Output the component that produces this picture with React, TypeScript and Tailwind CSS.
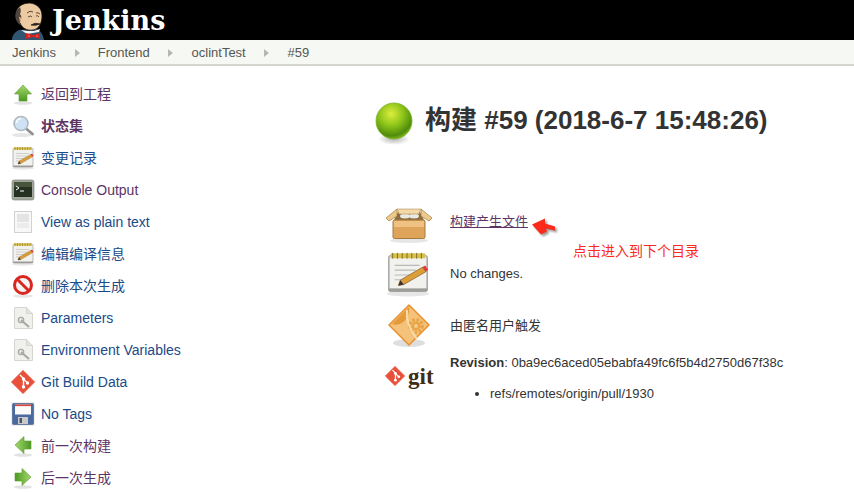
import type { ReactNode } from 'react';

const sans = 'font-["Liberation_Sans","Noto_Sans_CJK_SC",sans-serif]';

const Jenkins = () => (
  <svg width="34" height="40" viewBox="0 0 34 40">
    <path d="M0 40c0-5 3-8 7-10l17-1c4 1 7 5 8 11z" fill="#2f5570" />
    <path d="M4 15C4 7 10 3 18 3c7 1 12 5 12 13 0 7-3 13-9 14-6 1-11-2-13-7-3-1-4-5-4-8z" fill="#eccaa2" stroke="#1d1613" strokeWidth="0.800" />
    <path d="M8 25C3 21 2 15 5 10l3-3c1 3 1 5 0 7 1 2 2 3 1 5-1 2-1 4-1 6z" fill="#4d453e" />
    <path d="M7 17q2-1 2 3l-1 2z" fill="#d9ae84" />
    <path d="M15 13q3-3 6-1M24 13q2-1 4 1M16 17q3-2 4 0M24 16q2-1 3 1" stroke="#3a2a22" strokeWidth="0.800" fill="none" />
    <path d="M19 25q4-3 9-1-4 2-9 1z" fill="#2c211c" stroke="#2c211c" strokeWidth="0.800" />
    <path d="M9 30l6 4 12-2 1-3-6 2-7 0z" fill="#f4f4f4" />
    <path d="M14 33l7 2 7-2v6l-7-2-7 2z" fill="#d3211f" />
    <circle cx="17" cy="36" r="0.600" fill="#fff" />
    <circle cx="25" cy="36" r="0.600" fill="#fff" />
  </svg>
);

const Sep = () => (
  <svg width="5" height="8" viewBox="0 0 5 8" className="mx-auto">
    <path d="M0 0l5 4-5 4z" fill="#b5b8b2" />
  </svg>
);

const Arrow = ({ dir }: { dir: 'up' | 'left' | 'right' }) => {
  const rot = dir === 'up' ? 0 : dir === 'left' ? -90 : 90;
  return (
    <svg width="24" height="24" viewBox="0 0 24 24">
      <defs>
        <linearGradient id={`arr-${dir}`} x1="0" y1="0" x2="0" y2="1">
          <stop offset="0" stopColor="#a6d86c" />
          <stop offset="1" stopColor="#4b9a22" />
        </linearGradient>
      </defs>
      <ellipse cx="12" cy="21" rx="9" ry="1.800" fill="#e2e2e2" />
      <path
        d="M12 3l8.500 9H16v7H8v-7H3.500z"
        fill={`url(#arr-${dir})`}
        stroke="#5a9a30"
        strokeWidth="0.600"
        transform={`rotate(${rot} 12 11)`}
      />
    </svg>
  );
};

const Search = () => (
  <svg width="24" height="24" viewBox="0 0 24 24">
    <ellipse cx="11" cy="21" rx="10" ry="2" fill="#e6e6e6" />
    <path d="M15.500 15l6 5" stroke="#8f8f8f" strokeWidth="2.800" strokeLinecap="round" />
    <circle cx="10" cy="9.500" r="7" fill="#cfe2f5" stroke="#b1b9c0" strokeWidth="1.600" />
    <path d="M5.500 9a4.500 4.500 0 0 1 4.500-4.500" stroke="#fff" strokeWidth="1.400" fill="none" />
  </svg>
);

const Notepad = ({ size = 24 }: { size?: number }) => (
  <svg width={size} height={size} viewBox="0 0 24 24">
    <ellipse cx="12" cy="22.300" rx="11" ry="1.400" fill="#e6e6e6" />
    <rect x="2" y="2.500" width="20" height="18.500" rx="0.800" fill="#f1f1ed" stroke="#8d8d8d" strokeWidth="0.600" />
    <rect x="2" y="19.500" width="20" height="1.500" fill="#9c9c98" />
    <rect x="3" y="1.200" width="18" height="2.600" fill="#d8c04c" />
    <path d="M4 1v3M6.500 1v3M9 1v3M11.500 1v3M14 1v3M16.500 1v3M19 1v3" stroke="#7d6d24" strokeWidth="0.500" />
    <path d="M5 7.500h13M5 10h11M5 12.500h8M5 15h6" stroke="#b9b9b9" strokeWidth="0.600" />
    <path d="M7 18l1-2.800L19.500 8.500l1.800 2.300L9.800 17.500z" fill="#dd9e3a" stroke="#8a6426" strokeWidth="0.400" />
    <path d="M19.500 8.500l1.800 2.300 1.200-1-1.500-2.200z" fill="#dc3b3b" />
    <path d="M7 18l1-2.800 1.800 2.300z" fill="#333" />
  </svg>
);

const Terminal = () => (
  <svg width="24" height="24" viewBox="0 0 24 24">
    <rect x="1" y="2" width="22" height="20" rx="2" fill="#a2a69c" stroke="#7a7d74" strokeWidth="0.600" />
    <rect x="3" y="4" width="18" height="15" fill="#263220" />
    <rect x="3" y="4" width="18" height="5" fill="#46553c" />
    <path d="M5 8l3 2-3 2" stroke="#fff" strokeWidth="1" fill="none" />
    <path d="M9 13h4" stroke="#fff" strokeWidth="1" />
    <circle cx="17" cy="20.500" r="0.600" fill="#7fd04c" />
  </svg>
);

const PlainDoc = () => (
  <svg width="24" height="24" viewBox="0 0 24 24">
    <rect x="3.500" y="1.500" width="17" height="21" fill="#f8f8f8" stroke="#d2d2d2" />
    <rect x="6" y="4" width="12" height="8" fill="#e4e4e4" />
    <rect x="6" y="13" width="12" height="5" fill="#ececec" />
  </svg>
);

const NoEntry = () => (
  <svg width="24" height="24" viewBox="0 0 24 24">
    <ellipse cx="12" cy="22" rx="10" ry="1.800" fill="#e6e6e6" />
    <circle cx="12" cy="11" r="8.500" fill="#f4f4f4" stroke="#d9271f" strokeWidth="3" />
    <path d="M6 5l12 12" stroke="#d9271f" strokeWidth="3" />
  </svg>
);

const WrenchDoc = () => (
  <svg width="24" height="24" viewBox="0 0 24 24">
    <path d="M3.500 1.500h12l6 6v15h-18z" fill="#f0f0ec" stroke="#d6d6d1" />
    <path d="M15.500 1.500v6h6" fill="#e3e3df" stroke="#d6d6d1" />
    <path d="M10 14l8 7" stroke="#a8a8a8" strokeWidth="2.200" />
    <circle cx="10" cy="14" r="2.600" fill="none" stroke="#a8a8a8" strokeWidth="1.400" />
  </svg>
);

const GitMark = ({ size = 24 }: { size?: number }) => (
  <svg width={size} height={size} viewBox="0 0 24 24">
    <path d="M12 0.500L23.500 12 12 23.500 0.500 12z" fill="#e8503a" stroke="#e8503a" strokeLinejoin="round" />
    <path d="M9 5l3.500 3.500v8M12.500 9l4 4" stroke="#fff" strokeWidth="1.400" fill="none" />
    <circle cx="12.500" cy="9" r="1.700" fill="#fff" />
    <circle cx="12.500" cy="17" r="1.700" fill="#fff" />
    <circle cx="16.500" cy="13" r="1.700" fill="#fff" />
  </svg>
);

const Floppy = () => (
  <svg width="24" height="24" viewBox="0 0 24 24">
    <rect width="24" height="24" fill="#eeeeee" />
    <rect x="1.500" y="1.500" width="21" height="21" rx="1" fill="#4a6a9f" stroke="#2f4a78" strokeWidth="0.500" />
    <rect x="4" y="2.500" width="16" height="10" fill="#fafafa" />
    <rect x="4" y="2.500" width="16" height="1.600" fill="#d8483c" />
    <rect x="7" y="15" width="10" height="7" fill="#c9c9c9" />
    <rect x="8.500" y="16" width="2.500" height="5" fill="#4a5468" />
  </svg>
);

const Box = () => (
  <svg width="48" height="36" viewBox="0 0 48 36">
    <ellipse cx="24" cy="32.500" rx="19" ry="2.500" fill="#e6e6e6" />
    <path d="M13 4h22l4 8H9z" fill="#8c6c42" />
    <ellipse cx="20" cy="8" rx="5" ry="2.500" fill="#e9e9e4" />
    <ellipse cx="29" cy="8" rx="5" ry="2.500" fill="#e9e9e4" />
    <rect x="8" y="12" width="32" height="18.500" rx="1.500" fill="#dda45a" stroke="#a57c40" />
    <rect x="9" y="13" width="30" height="6" fill="#efc283" />
    <path d="M12 1L1 10l3 3 8-5V1zM36 1l11 9-3 3-8-5V1z" fill="#eec98d" stroke="#a57c40" strokeWidth="0.700" />
    <path d="M12 1h24l-2 5H14z" fill="#f3d8a8" stroke="#a57c40" strokeWidth="0.500" />
  </svg>
);

const Gears = () => (
  <svg width="44" height="46" viewBox="0 0 44 46">
    <ellipse cx="22" cy="39" rx="16" ry="4" fill="#dedede" />
    <path d="M22 1l20 20-20 20L2 21z" fill="#f4c27a" stroke="#ea8f2e" strokeWidth="1.500" strokeLinejoin="round" />
    <path d="M22 3L5 20c6 2 11-1 14-5 2-3 4-8 3-12z" fill="#e59a3a" />
    <circle cx="29" cy="22" r="6" fill="none" stroke="#e8a548" strokeWidth="4" strokeDasharray="2.500 1.500" />
    <circle cx="29" cy="22" r="4" fill="#e8a548" />
    <circle cx="29" cy="22" r="2" fill="#f6cd8a" />
    <path d="M20 6q-2 14 10 29" stroke="#f8dca8" strokeWidth="2" fill="none" />
  </svg>
);

const Ball = () => (
  <svg width="38" height="44" viewBox="0 0 38 44">
    <defs>
      <radialGradient id="ball" cx="0.420" cy="0.300" r="0.720">
        <stop offset="0" stopColor="#dcee3e" />
        <stop offset="0.450" stopColor="#8fc61a" />
        <stop offset="0.850" stopColor="#4f8c0c" />
        <stop offset="1" stopColor="#86bb22" />
      </radialGradient>
      <radialGradient id="ballShade">
        <stop offset="0" stopColor="#b5b5b5" />
        <stop offset="1" stopColor="#ffffff" />
      </radialGradient>
    </defs>
    <ellipse cx="19" cy="37" rx="16" ry="6" fill="url(#ballShade)" />
    <circle cx="19" cy="19" r="18" fill="url(#ball)" stroke="#7fb32a" strokeWidth="0.800" />
  </svg>
);

const RedArrow = () => (
  <svg width="30" height="24" viewBox="0 0 30 24">
    <defs>
      <filter id="arrowBlur" x="-20%" y="-20%" width="140%" height="140%">
        <feGaussianBlur stdDeviation="1" />
      </filter>
    </defs>
    <path
      d="M1 7.500L14 1.500 14 6.500 24 9.500 24 13.500 15 11.500 16 14.500 10 17.500z"
      fill="#999999"
      transform="translate(2 2)"
      filter="url(#arrowBlur)"
    />
    <path d="M1 7.500L14 1.500 14 6.500 24 9.500 24 13.500 15 11.500 16 14.500 10 17.500z" fill="#fb2a1a" />
  </svg>
);

type Item = { icon: ReactNode; label: string; visited?: boolean; bold?: boolean };

const items: Item[] = [
  { icon: <Arrow dir="up" />, label: '返回到工程', visited: true },
  { icon: <Search />, label: '状态集', visited: true, bold: true },
  { icon: <Notepad />, label: '变更记录' },
  { icon: <Terminal />, label: 'Console Output', visited: true },
  { icon: <PlainDoc />, label: 'View as plain text' },
  { icon: <Notepad />, label: '编辑编译信息' },
  { icon: <NoEntry />, label: '删除本次生成' },
  { icon: <WrenchDoc />, label: 'Parameters' },
  { icon: <WrenchDoc />, label: 'Environment Variables' },
  { icon: <GitMark />, label: 'Git Build Data' },
  { icon: <Floppy />, label: 'No Tags' },
  { icon: <Arrow dir="left" />, label: '前一次构建', visited: true },
  { icon: <Arrow dir="right" />, label: '后一次生成', visited: true },
];

const crumbs = ['Jenkins', 'Frontend', 'oclintTest', '#59'];

export default function App() {
  return (
    <div className={`h-[492px] w-[854px] overflow-hidden bg-white text-[13px] text-[#333333] ${sans}`}>
      <header className="flex h-10 items-center overflow-hidden bg-black pl-[12px]">
        <Jenkins />
        <span className='ml-[6px] font-["DejaVu_Serif",serif] text-[27px] leading-none font-bold text-white'>Jenkins</span>
      </header>

      <nav className="flex h-[26px] items-center border-b-2 border-[#d3d7cf] bg-[#f6f8f3] pt-[1px] pl-3 text-[#555753]">
        {crumbs.map((c, i) => (
          <div key={c} className="flex items-center">
            <span>{c}</span>
            {i < crumbs.length - 1 && (
              <span className="-mr-[0.3px] w-[42px]">
                <Sep />
              </span>
            )}
          </div>
        ))}
      </nav>

      <div className="relative flex">
        <aside className="w-[375px] shrink-0 pt-3 pl-[11px]">
          {items.map((it) => (
            <div key={it.label} className="flex h-8 items-center">
              <div className="flex w-[30px] justify-start">{it.icon}</div>
              <span
                className={`text-[14px] ${it.visited ? 'text-[#5c3566]' : 'text-[#204a87]'} ${it.bold ? 'font-bold' : ''}`}
              >
                {it.label}
              </span>
            </div>
          ))}
        </aside>

        <main className="flex-1 pt-9">
          <div className="flex items-center">
            <Ball />
            <h1 className="mb-2 ml-3 text-[26px] leading-none font-bold whitespace-nowrap">构建 #59 (2018-6-7 15:48:26)</h1>
          </div>

          <div className="mt-[54px] flex flex-col pl-[10px]">
            <div className="flex h-[44px] items-center">
              <div className="mt-2 w-[65px]"><Box /></div>
              <a className="text-[#5c3566] underline">构建产生文件</a>
              <div className="mt-[14px] ml-[3px]"><RedArrow /></div>
            </div>
            <div className="flex h-[60px] items-center">
              <div className="w-[65px]"><Notepad size={46} /></div>
              <span>No changes.</span>
            </div>
            <div className="flex h-[44px] items-center">
              <div className="mt-[2px] w-[65px] pl-[2px]"><Gears /></div>
              <span>由匿名用户触发</span>
            </div>
            <div className="mt-[5px] flex">
              <div className="mb-[4px] flex w-[65px] items-center">
                <GitMark size={20} />
                <span className='ml-[3px] font-["Liberation_Serif",serif] text-[23px] leading-none font-bold text-[#3f2d14]'>git</span>
              </div>
              <div>
                <p className="whitespace-nowrap"><b>Revision</b>: 0ba9ec6aced05ebabfa49fc6f5b4d2750d67f38c</p>
                <ul className="mt-[11px] list-disc pl-10 whitespace-nowrap">
                  <li>refs/remotes/origin/pull/1930</li>
                </ul>
              </div>
            </div>
          </div>
        </main>

        <span className="absolute top-[175px] left-[573px] text-[14px] leading-5 whitespace-nowrap text-[#fb2a1a]">点击进入到下个目录</span>
      </div>
    </div>
  );
}
